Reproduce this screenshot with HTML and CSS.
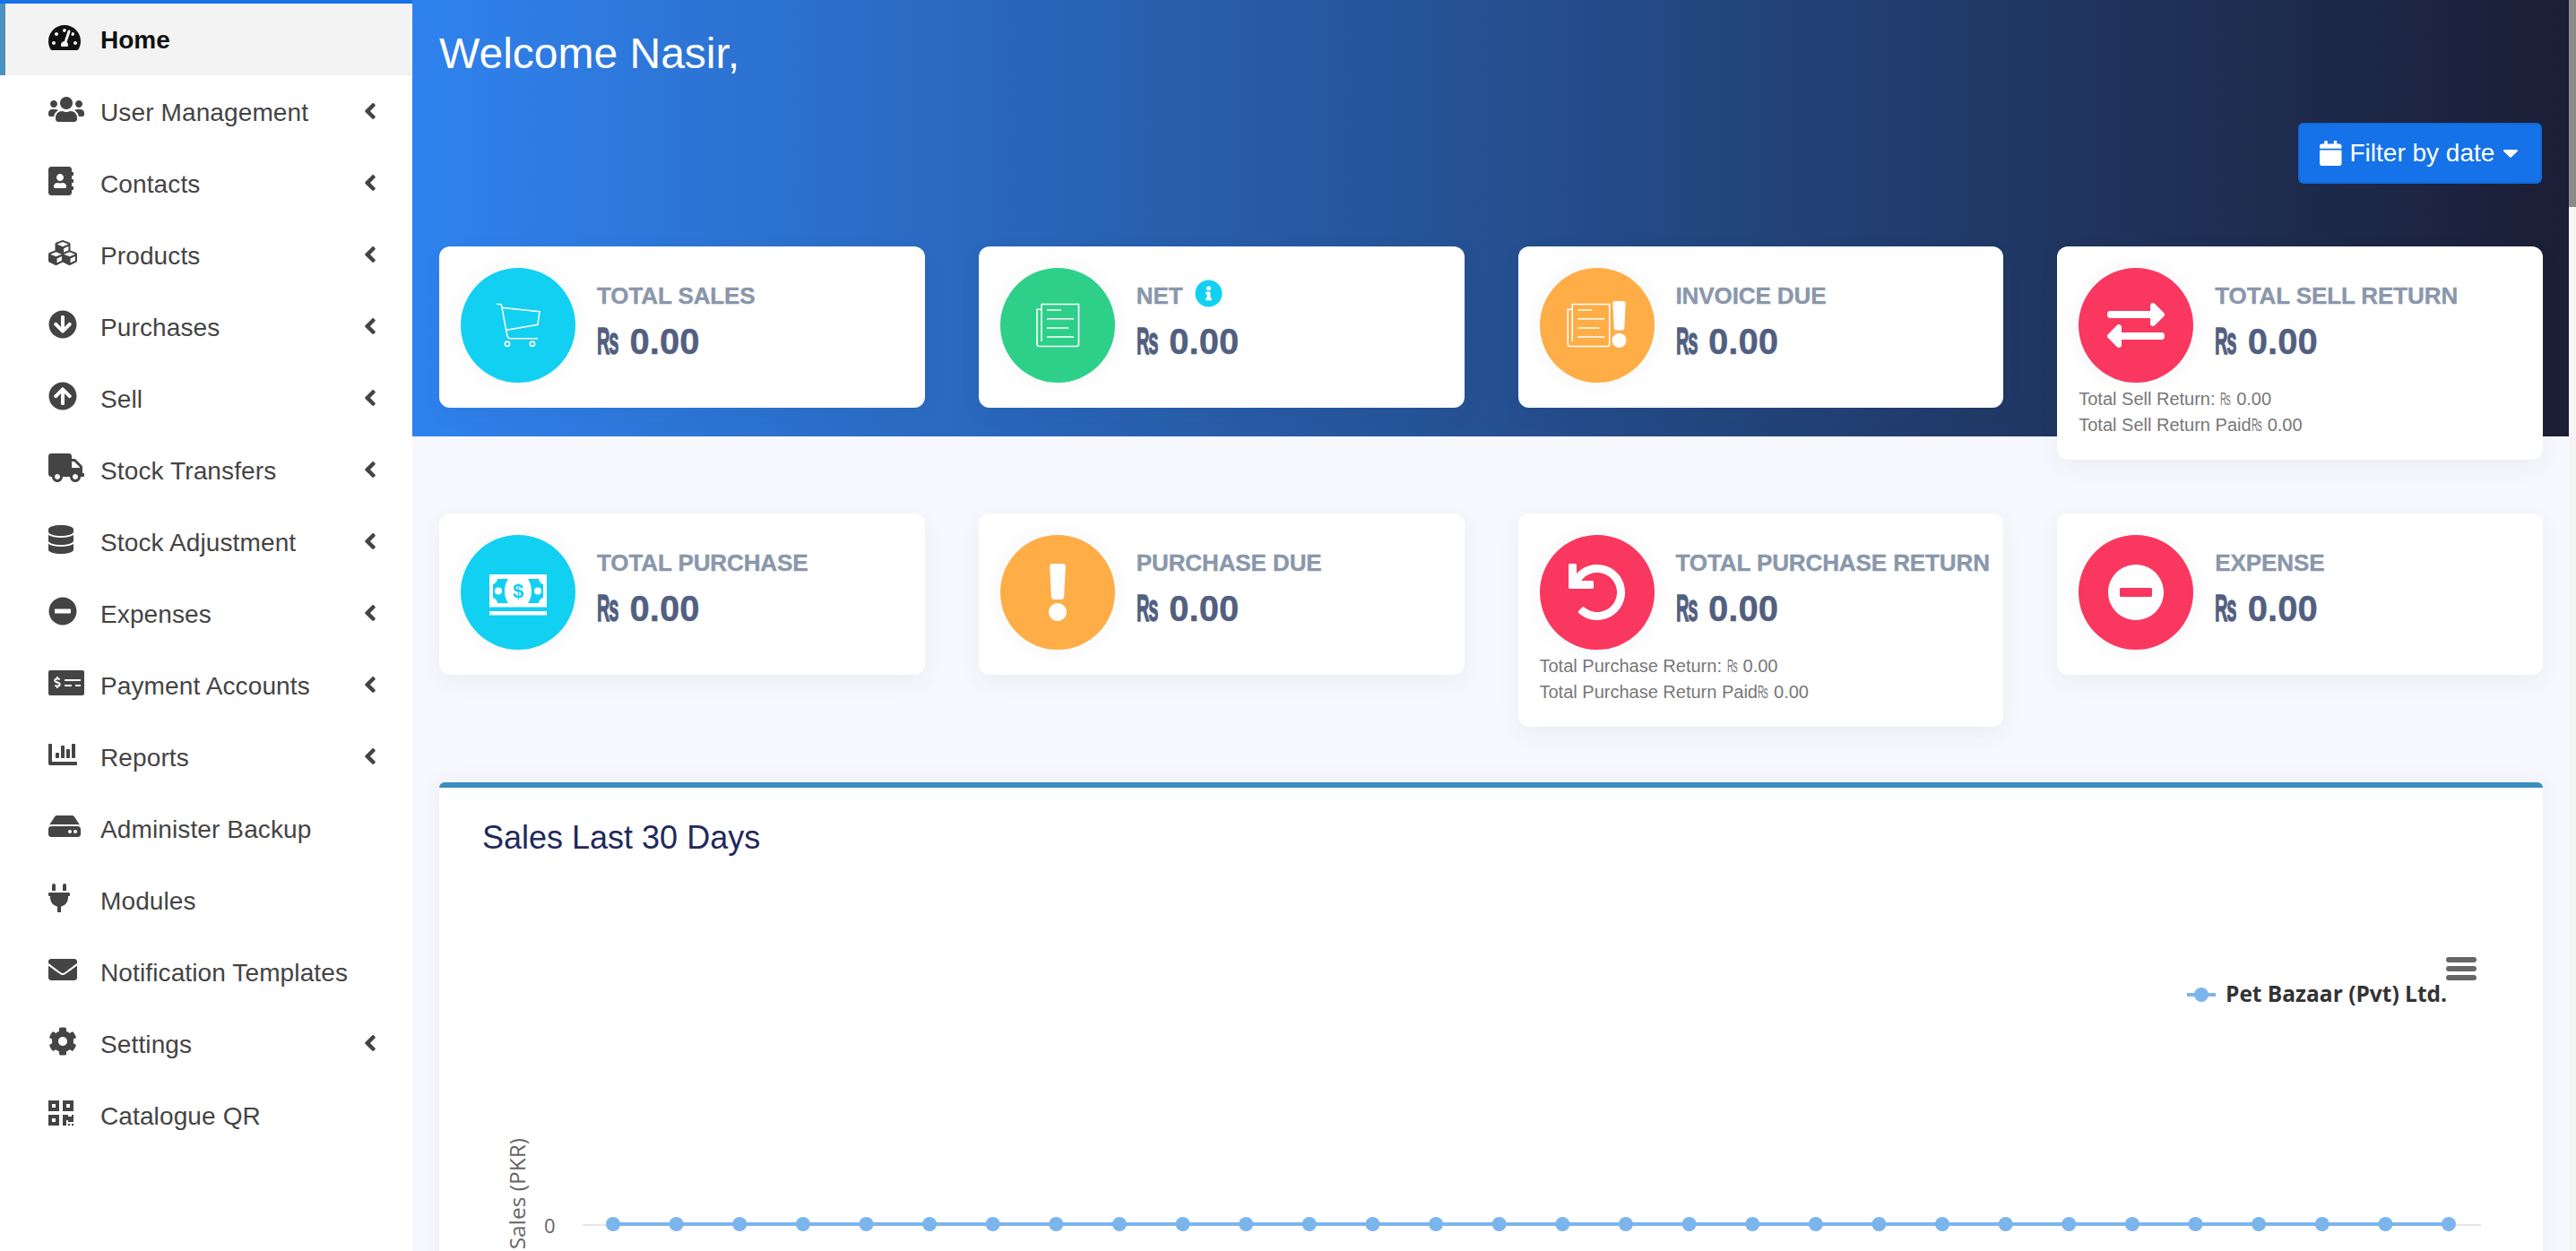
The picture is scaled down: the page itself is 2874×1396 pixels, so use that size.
FILE: index.html
```html
<!DOCTYPE html>
<html lang="en">
<head>
<meta charset="utf-8">
<title>Home</title>
<link rel="stylesheet" href="styles.css">
</head>
<body>
<svg class="defs" aria-hidden="true">
  <symbol id="chev" viewBox="24 96 208 320"><path d="M31.7 239l136-136c9.4-9.4 24.6-9.4 33.9 0l22.6 22.6c9.4 9.4 9.4 24.6 0 33.9L127.9 256l96.4 96.4c9.4 9.4 9.4 24.6 0 33.9L201.7 409c-9.4 9.4-24.6 9.4-33.9 0l-136-136c-9.5-9.4-9.5-24.6-.1-34z"/></symbol>
</svg>
<div class="app">
  <aside class="sidebar">
    <ul class="menu">
      <li class="item active"><svg class="ico" viewBox="0 0 576 512"><path d="M288 32C128.94 32 0 160.94 0 320c0 52.8 14.25 102.26 39.06 144.8 5.61 9.62 16.3 15.2 27.44 15.2h443c11.14 0 21.83-5.58 27.44-15.2C561.75 422.26 576 372.8 576 320c0-159.06-128.94-288-288-288zm0 64c14.71 0 26.58 10.13 30.32 23.65-1.11 2.26-2.64 4.23-3.45 6.67l-9.22 27.67c-5.13 3.49-10.97 6.01-17.64 6.01-17.67 0-32-14.33-32-32S270.33 96 288 96zM96 384c-17.67 0-32-14.33-32-32s14.33-32 32-32 32 14.33 32 32-14.33 32-32 32zm48-160c-17.67 0-32-14.33-32-32s14.33-32 32-32 32 14.33 32 32-14.33 32-32 32zm246.77-72.41l-61.33 184C343.13 347.33 352 364.54 352 384c0 11.72-3.38 22.55-8.88 32H232.88c-5.5-9.45-8.88-20.28-8.88-32 0-33.94 26.5-61.43 59.9-63.59l61.34-184.01c4.17-12.56 17.73-19.45 30.36-15.17 12.57 4.19 19.35 17.79 15.17 30.36zm14.66 57.2l15.52-46.55c3.47-1.29 7.13-2.23 11.05-2.23 17.67 0 32 14.33 32 32s-14.33 32-32 32c-11.38-.01-20.89-6.28-26.57-15.22zM480 384c-17.67 0-32-14.33-32-32s14.33-32 32-32 32 14.33 32 32-14.33 32-32 32z"/></svg><span class="label">Home</span></li>
      <li class="item"><svg class="ico" viewBox="0 0 640 512"><path d="M96 224c35.3 0 64-28.7 64-64s-28.7-64-64-64-64 28.7-64 64 28.7 64 64 64zm448 0c35.3 0 64-28.7 64-64s-28.7-64-64-64-64 28.7-64 64 28.7 64 64 64zm32 32h-64c-17.6 0-33.5 7.1-45.1 18.6 40.3 22.1 68.9 62 75.1 109.4h66c17.7 0 32-14.3 32-32v-32c0-35.3-28.7-64-64-64zm-256 0c61.9 0 112-50.1 112-112S381.9 32 320 32 208 82.1 208 144s50.1 112 112 112zm76.8 32h-8.3c-20.8 10-43.9 16-68.5 16s-47.6-6-68.5-16h-8.3C179.6 288 128 339.6 128 403.2V432c0 26.5 21.5 48 48 48h288c26.5 0 48-21.5 48-48v-28.8c0-63.6-51.6-115.2-115.2-115.2zm-223.7-13.4C161.5 263.1 145.6 256 128 256H64c-35.3 0-64 28.7-64 64v32c0 17.7 14.3 32 32 32h65.9c6.3-47.4 34.9-87.3 75.2-109.4z"/></svg><span class="label">User Management</span><svg class="chev"><use href="#chev"/></svg></li>
      <li class="item"><svg class="ico" viewBox="0 0 448 512"><path d="M436 160c6.6 0 12-5.4 12-12v-40c0-6.6-5.4-12-12-12h-20V48c0-26.5-21.5-48-48-48H48C21.5 0 0 21.5 0 48v416c0 26.5 21.5 48 48 48h320c26.5 0 48-21.5 48-48v-48h20c6.6 0 12-5.4 12-12v-40c0-6.6-5.4-12-12-12h-20v-64h20c6.6 0 12-5.4 12-12v-40c0-6.6-5.4-12-12-12h-20v-64h20zm-228-32c35.3 0 64 28.7 64 64s-28.7 64-64 64-64-28.7-64-64 28.7-64 64-64zm112 236.8c0 10.6-10 19.2-22.4 19.2H118.4C106 384 96 375.4 96 364.8v-19.2c0-31.8 30.1-57.6 67.2-57.6h5c12.3 5.1 25.7 8 39.8 8s27.6-2.9 39.8-8h5c37.1 0 67.2 25.8 67.2 57.6v19.2z"/></svg><span class="label">Contacts</span><svg class="chev"><use href="#chev"/></svg></li>
      <li class="item"><svg class="ico" viewBox="0 0 512 512"><path d="M488.6 250.2L392 214V105.5c0-15-9.3-28.4-23.4-33.7l-100-37.5c-8.1-3.1-17.1-3.1-25.3 0l-100 37.5c-14.1 5.3-23.4 18.7-23.4 33.7V214l-96.6 36.2C9.3 255.5 0 268.9 0 283.9V394c0 13.6 7.7 26.1 19.9 32.2l100 50c10.1 5.1 22.1 5.1 32.2 0l103.9-52 103.9 52c10.1 5.1 22.1 5.1 32.2 0l100-50c12.2-6.1 19.9-18.6 19.9-32.2V283.9c0-15-9.3-28.4-23.4-33.7zM358 214.8l-85 31.9v-68.2l85-37v73.3zM154 104.1l102-38.2 102 38.2v.6l-102 41.4-102-41.4v-.6zm84 291.1l-85 42.5v-79.1l85-38.8v75.4zm0-112l-102 41.4-102-41.4v-.6l102-38.2 102 38.2v.6zm240 112l-85 42.5v-79.1l85-38.8v75.4zm0-112l-102 41.4-102-41.4v-.6l102-38.2 102 38.2v.6z"/></svg><span class="label">Products</span><svg class="chev"><use href="#chev"/></svg></li>
      <li class="item"><svg class="ico" viewBox="0 0 512 512"><path d="M504 256c0 137-111 248-248 248S8 393 8 256 119 8 256 8s248 111 248 248zm-143.6-28.9L288 302.6V120c0-13.3-10.7-24-24-24h-16c-13.3 0-24 10.7-24 24v182.6l-72.4-75.5c-9.3-9.7-24.8-9.9-34.3-.4l-10.9 11c-9.4 9.4-9.4 24.6 0 33.9L239 404.3c9.4 9.4 24.6 9.4 33.9 0l132.7-132.7c9.4-9.4 9.4-24.6 0-33.9l-10.9-11c-9.5-9.5-25-9.3-34.3.4z"/></svg><span class="label">Purchases</span><svg class="chev"><use href="#chev"/></svg></li>
      <li class="item"><svg class="ico" viewBox="0 0 512 512"><path d="M8 256C8 119 119 8 256 8s248 111 248 248-111 248-248 248S8 393 8 256zm143.6 28.9l72.4-75.5V392c0 13.3 10.7 24 24 24h16c13.3 0 24-10.7 24-24V209.4l72.4 75.5c9.3 9.7 24.8 9.9 34.3.4l10.9-11c9.4-9.4 9.4-24.6 0-33.9L273 107.7c-9.4-9.4-24.6-9.4-33.9 0L106.3 240.4c-9.4 9.4-9.4 24.6 0 33.9l10.9 11c9.6 9.5 25.1 9.3 34.4-.4z"/></svg><span class="label">Sell</span><svg class="chev"><use href="#chev"/></svg></li>
      <li class="item"><svg class="ico" viewBox="0 0 640 512"><path d="M624 352h-16V243.9c0-12.7-5.1-24.9-14.1-33.9L494 110.1c-9-9-21.2-14.1-33.9-14.1H416V48c0-26.5-21.5-48-48-48H48C21.5 0 0 21.5 0 48v320c0 26.5 21.5 48 48 48h16c0 53 43 96 96 96s96-43 96-96h128c0 53 43 96 96 96s96-43 96-96h48c8.8 0 16-7.2 16-16v-32c0-8.8-7.2-16-16-16zM160 464c-26.5 0-48-21.5-48-48s21.5-48 48-48 48 21.5 48 48-21.5 48-48 48zm320 0c-26.5 0-48-21.5-48-48s21.5-48 48-48 48 21.5 48 48-21.5 48-48 48zm80-208H416V144h44.1l99.9 99.9V256z"/></svg><span class="label">Stock Transfers</span><svg class="chev"><use href="#chev"/></svg></li>
      <li class="item"><svg class="ico" viewBox="0 0 448 512"><path d="M448 73.143v45.714C448 159.143 347.667 192 224 192S0 159.143 0 118.857V73.143C0 32.857 100.333 0 224 0s224 32.857 224 73.143zM448 176v102.857C448 319.143 347.667 352 224 352S0 319.143 0 278.857V176c48.125 33.143 136.208 48.572 224 48.572S399.874 209.143 448 176zm0 160v102.857C448 479.143 347.667 512 224 512S0 479.143 0 438.857V336c48.125 33.143 136.208 48.572 224 48.572S399.874 369.143 448 336z"/></svg><span class="label">Stock Adjustment</span><svg class="chev"><use href="#chev"/></svg></li>
      <li class="item"><svg class="ico" viewBox="0 0 512 512"><path d="M256 8C119 8 8 119 8 256s111 248 248 248 248-111 248-248S393 8 256 8zM124 296c-6.6 0-12-5.4-12-12v-56c0-6.6 5.4-12 12-12h264c6.6 0 12 5.4 12 12v56c0 6.6-5.4 12-12 12H124z"/></svg><span class="label">Expenses</span><svg class="chev"><use href="#chev"/></svg></li>
      <li class="item"><svg class="ico" viewBox="0 0 640 512"><path d="M608 32H32C14.33 32 0 46.33 0 64v384c0 17.67 14.33 32 32 32h576c17.67 0 32-14.33 32-32V64c0-17.67-14.33-32-32-32zM176 327.88V344c0 4.42-3.58 8-8 8h-16c-4.42 0-8-3.58-8-8v-16.29c-11.29-.58-22.27-4.52-31.37-11.35-3.9-2.93-4.1-8.77-.57-12.14l11.75-11.21c2.77-2.64 6.89-2.76 10.13-.73 3.87 2.42 8.26 3.72 12.82 3.72h28.11c6.5 0 11.8-5.92 11.8-13.19 0-5.95-3.61-11.19-8.77-12.73l-45-13.5c-18.59-5.58-31.58-23.42-31.58-43.39 0-24.52 19.05-44.44 42.67-45.07V152c0-4.42 3.58-8 8-8h16c4.42 0 8 3.58 8 8v16.29c11.29.58 22.27 4.51 31.37 11.35 3.9 2.93 4.1 8.77.57 12.14l-11.75 11.21c-2.77 2.64-6.89 2.76-10.13.73-3.87-2.43-8.26-3.72-12.82-3.72h-28.11c-6.5 0-11.8 5.92-11.8 13.19 0 5.95 3.61 11.19 8.77 12.73l45 13.5c18.59 5.58 31.58 23.42 31.58 43.39 0 24.53-19.05 44.44-42.67 45.07zM416 312c0 4.42-3.58 8-8 8H296c-4.42 0-8-3.58-8-8v-16c0-4.42 3.58-8 8-8h112c4.42 0 8 3.58 8 8v16zm160 0c0 4.42-3.58 8-8 8h-80c-4.42 0-8-3.58-8-8v-16c0-4.42 3.58-8 8-8h80c4.42 0 8 3.58 8 8v16zm0-96c0 4.42-3.58 8-8 8H296c-4.42 0-8-3.58-8-8v-16c0-4.42 3.58-8 8-8h272c4.42 0 8 3.58 8 8v16z"/></svg><span class="label">Payment Accounts</span><svg class="chev"><use href="#chev"/></svg></li>
      <li class="item"><svg class="ico" viewBox="0 0 512 512"><path d="M332.8 320h38.4c6.4 0 12.8-6.4 12.8-12.8V172.8c0-6.4-6.4-12.8-12.8-12.8h-38.4c-6.4 0-12.8 6.4-12.8 12.8v134.4c0 6.4 6.4 12.8 12.8 12.8zm96 0h38.4c6.4 0 12.8-6.4 12.8-12.8V76.8c0-6.4-6.4-12.8-12.8-12.8h-38.4c-6.4 0-12.8 6.4-12.8 12.8v230.4c0 6.4 6.4 12.8 12.8 12.8zm-288 0h38.4c6.4 0 12.8-6.4 12.8-12.8v-70.4c0-6.4-6.4-12.8-12.8-12.8h-38.4c-6.4 0-12.8 6.4-12.8 12.8v70.4c0 6.4 6.4 12.8 12.8 12.8zm96 0h38.4c6.4 0 12.8-6.4 12.8-12.8V108.8c0-6.4-6.4-12.8-12.8-12.8h-38.4c-6.4 0-12.8 6.4-12.8 12.8v198.4c0 6.4 6.4 12.8 12.8 12.8zM496 384H64V80c0-8.84-7.16-16-16-16H16C7.16 64 0 71.16 0 80v336c0 17.67 14.33 32 32 32h464c8.84 0 16-7.16 16-16v-32c0-8.84-7.16-16-16-16z"/></svg><span class="label">Reports</span><svg class="chev"><use href="#chev"/></svg></li>
      <li class="item"><svg class="ico" viewBox="0 0 576 512"><path d="M576 304v96c0 26.51-21.49 48-48 48H48c-26.51 0-48-21.49-48-48v-96c0-26.51 21.49-48 48-48h480c26.51 0 48 21.49 48 48zm-48-80a79.557 79.557 0 0 1 30.777 6.165L462.25 85.374A48.003 48.003 0 0 0 422.311 64H153.689a48 48 0 0 0-39.938 21.374L17.223 230.165A79.557 79.557 0 0 1 48 224h480zm-48 96c-17.673 0-32 14.327-32 32s14.327 32 32 32 32-14.327 32-32-14.327-32-32-32zm-96 0c-17.673 0-32 14.327-32 32s14.327 32 32 32 32-14.327 32-32-14.327-32-32-32z"/></svg><span class="label">Administer Backup</span></li>
      <li class="item"><svg class="ico" viewBox="0 0 384 512"><path d="M320,32a32,32,0,0,0-64,0v96h64Zm48,128H16A16,16,0,0,0,0,176v32a16,16,0,0,0,16,16H32v32A160.07,160.07,0,0,0,160,412.8V512h64V412.8A160.07,160.07,0,0,0,352,256V224h16a16,16,0,0,0,16-16V176A16,16,0,0,0,368,160ZM128,32a32,32,0,0,0-64,0v96h64Z"/></svg><span class="label">Modules</span></li>
      <li class="item"><svg class="ico" viewBox="0 0 512 512"><path d="M502.3 190.8c3.9-3.1 9.7-.2 9.7 4.7V400c0 26.5-21.5 48-48 48H48c-26.5 0-48-21.5-48-48V195.6c0-5 5.7-7.8 9.7-4.7 22.4 17.4 52.1 39.5 154.1 113.6 21.1 15.4 56.7 47.8 92.2 47.6 35.7.3 72-32.8 92.3-47.6 102-74.1 131.6-96.3 154-113.7zM256 320c23.2.4 56.6-29.2 73.4-41.4 132.7-96.3 142.8-104.7 173.4-128.7 5.8-4.5 9.2-11.5 9.2-18.9v-19c0-26.5-21.5-48-48-48H48C21.5 64 0 85.5 0 112v19c0 7.4 3.4 14.3 9.2 18.9 30.6 23.9 40.7 32.4 173.4 128.7 16.8 12.2 50.2 41.8 73.4 41.4z"/></svg><span class="label">Notification Templates</span></li>
      <li class="item"><svg class="ico" viewBox="0 0 512 512"><path d="M487.4 315.7l-42.6-24.6c4.3-23.2 4.3-47 0-70.2l42.6-24.6c4.9-2.8 7.1-8.6 5.5-14-11.1-35.6-30-67.8-54.7-94.6-3.8-4.1-10-5.1-14.8-2.3L380.8 110c-17.9-15.4-38.5-27.3-60.8-35.1V25.8c0-5.6-3.9-10.5-9.4-11.7-36.7-8.2-74.3-7.8-109.2 0-5.5 1.2-9.4 6.1-9.4 11.7V75c-22.2 7.9-42.8 19.8-60.8 35.1L88.7 85.5c-4.9-2.8-11-1.9-14.8 2.3-24.7 26.7-43.6 58.9-54.7 94.6-1.7 5.4.6 11.2 5.5 14L67.3 221c-4.3 23.2-4.3 47 0 70.2l-42.6 24.6c-4.9 2.8-7.1 8.6-5.5 14 11.1 35.6 30 67.8 54.7 94.6 3.8 4.1 10 5.1 14.8 2.3l42.6-24.6c17.9 15.4 38.5 27.3 60.8 35.1v49.2c0 5.6 3.9 10.5 9.4 11.7 36.7 8.2 74.3 7.8 109.2 0 5.5-1.2 9.4-6.1 9.4-11.7v-49.2c22.2-7.9 42.8-19.8 60.8-35.1l42.6 24.6c4.9 2.8 11 1.9 14.8-2.3 24.7-26.7 43.6-58.9 54.7-94.6 1.5-5.5-.7-11.3-5.6-14.1zM256 336c-44.1 0-80-35.9-80-80s35.9-80 80-80 80 35.9 80 80-35.9 80-80 80z"/></svg><span class="label">Settings</span><svg class="chev"><use href="#chev"/></svg></li>
      <li class="item"><svg class="ico" viewBox="0 0 448 512"><path d="M0 224h192V32H0v192zM64 96h64v64H64V96zm192-64v192h192V32H256zm128 128h-64V96h64v64zM0 480h192V288H0v192zm64-128h64v64H64v-64zm352-64h32v128h-96v-32h-32v96h-64V288h96v32h64v-32zm0 160h32v32h-32v-32zm-64 0h32v32h-32v-32z"/></svg><span class="label">Catalogue QR</span></li>
    </ul>
  </aside>

  <main class="main">
    <h1 class="welcome">Welcome Nasir,</h1>
    <div class="filter-row">
      <button class="filter-btn" type="button">
        <svg class="btn-ico" viewBox="0 0 448 512"><path d="M12 192h424c6.6 0 12 5.4 12 12v260c0 26.5-21.5 48-48 48H48c-26.5 0-48-21.5-48-48V204c0-6.6 5.4-12 12-12zm436-44v-36c0-26.5-21.5-48-48-48h-48V12c0-6.6-5.4-12-12-12h-40c-6.6 0-12 5.4-12 12v52H160V12c0-6.6-5.4-12-12-12h-40c-6.6 0-12 5.4-12 12v52H48C21.5 64 0 85.5 0 112v36c0 6.6 5.4 12 12 12h424c6.6 0 12-5.4 12-12z"/></svg>
        <span>Filter by date</span>
        <svg class="caret" viewBox="0 0 16 9"><path d="M1.2 0h13.6c1 0 1.5 1.2.8 1.9L8.8 8.6c-.4.5-1.2.5-1.6 0L.4 1.9C-.3 1.2.2 0 1.2 0z"/></svg>
      </button>
    </div>

    <section class="stats">
      <article class="card">
        <div class="card-top">
          <div class="badge cyan">
            <svg class="badge-art" viewBox="0 0 128 128" fill="none" stroke="#fff" stroke-width="1.6"><path d="M40 40.3c3 0 5.2.2 5.6 1.8l6 32c.4 3 1.4 4.6 4 4.6H86"/><path d="M45.5 44.3L88 48.7l-2 14.6-35 6"/><circle cx="52" cy="84.7" r="2.6"/><circle cx="80" cy="84.7" r="2.6"/></svg>
          </div>
          <div class="info"><h3 class="title">TOTAL SALES</h3><p class="value"><span>₨</span> 0.00</p></div>
        </div>
      </article>
      <article class="card">
        <div class="card-top">
          <div class="badge green">
            <svg class="badge-art" viewBox="0 0 128 128" fill="none" stroke="#fff" stroke-width="1.6"><path d="M46 82V40.5h41.5V85a2.5 2.5 0 0 1-2.5 2.5H43.5A2.5 2.5 0 0 1 41 85V46.3h5"/><path d="M52 47h16M52 56.7h30M52 67h24M52 77h30"/></svg>
          </div>
          <div class="info"><h3 class="title">NET<svg class="tip" viewBox="0 0 512 512"><path d="M256 8C119.043 8 8 119.083 8 256c0 136.997 111.043 248 248 248s248-111.003 248-248C504 119.083 392.957 8 256 8zm0 110c23.196 0 42 18.804 42 42s-18.804 42-42 42-42-18.804-42-42 18.804-42 42-42zm56 254c0 6.627-5.373 12-12 12h-88c-6.627 0-12-5.373-12-12v-24c0-6.627 5.373-12 12-12h12v-64h-12c-6.627 0-12-5.373-12-12v-24c0-6.627 5.373-12 12-12h64c6.627 0 12 5.373 12 12v100h12c6.627 0 12 5.373 12 12v24z"/></svg></h3><p class="value"><span>₨</span> 0.00</p></div>
        </div>
      </article>
      <article class="card">
        <div class="card-top">
          <div class="badge orange">
            <svg class="badge-art" viewBox="0 0 128 128" fill="none" stroke="#fff" stroke-width="1.6"><path d="M36.2 82V40.5h41.5V85a2.5 2.5 0 0 1-2.5 2.5H33.7a2.5 2.5 0 0 1-2.5-2.5V46.3h5"/><path d="M42.2 47h16M42.2 56.7h30M42.2 67h24M42.2 77h30"/><svg x="80.4" y="37" width="16.2" height="52" viewBox="16 0 160 512"><path fill="#fff" stroke="none" d="M176 432c0 44.112-35.888 80-80 80s-80-35.888-80-80 35.888-80 80-80 80 35.888 80 80zM25.26 25.199l13.6 272C39.499 309.972 50.041 320 62.83 320h66.34c12.789 0 23.331-10.028 23.97-22.801l13.6-272C167.425 11.49 156.496 0 142.77 0H49.23C35.504 0 24.575 11.49 25.26 25.199z"/></svg></svg>
          </div>
          <div class="info"><h3 class="title">INVOICE DUE</h3><p class="value"><span>₨</span> 0.00</p></div>
        </div>
      </article>
      <article class="card">
        <div class="card-top">
          <div class="badge red">
            <svg class="fa-64" viewBox="0 0 512 512"><path d="M0 168v-16c0-13.255 10.745-24 24-24h360V80c0-21.367 25.899-32.042 40.971-16.971l80 80c9.372 9.373 9.372 24.569 0 33.941l-80 80C409.956 271.982 384 261.456 384 240v-48H24c-13.255 0-24-10.745-24-24zm488 152H128v-48c0-21.314-25.862-32.08-40.971-16.971l-80 80c-9.372 9.373-9.372 24.569 0 33.941l80 80C102.057 463.997 128 453.437 128 432v-48h360c13.255 0 24-10.745 24-24v-16c0-13.255-10.745-24-24-24z"/></svg>
          </div>
          <div class="info"><h3 class="title">TOTAL SELL RETURN</h3><p class="value"><span>₨</span> 0.00</p></div>
        </div>
        <p class="sub">Total Sell Return: <span>₨</span> 0.00</p>
        <p class="sub">Total Sell Return Paid<span>₨</span> 0.00</p>
      </article>

      <article class="card">
        <div class="card-top">
          <div class="badge cyan">
            <svg class="badge-art" viewBox="0 0 128 128">
              <rect x="32" y="44" width="64" height="36.500" fill="#fff"/>
              <rect x="32" y="85" width="64" height="4.500" fill="#fff"/>
              <path fill="#12d0f2" d="M41 49h12c-3 5-4 9-4 13.500s1 9 4 13.500H41c-.5-3-2.500-5.500-5-6V55c2.500-.5 4.500-3 5-6zm46 0H75c3 5 4 9 4 13.500s-1 9-4 13.500h12c.5-3 2.500-5.500 5-6V55c-2.500-.5-4.500-3-5-6z"/>
              <circle cx="42" cy="62.500" r="4" fill="#fff"/><circle cx="86" cy="62.500" r="4" fill="#fff"/>
              <text class="dollar" x="64" y="70">$</text>
            </svg>
          </div>
          <div class="info"><h3 class="title">TOTAL PURCHASE</h3><p class="value"><span>₨</span> 0.00</p></div>
        </div>
      </article>
      <article class="card">
        <div class="card-top">
          <div class="badge orange">
            <svg class="fa-excl" viewBox="16 0 160 512"><path d="M176 432c0 44.112-35.888 80-80 80s-80-35.888-80-80 35.888-80 80-80 80 35.888 80 80zM25.26 25.199l13.6 272C39.499 309.972 50.041 320 62.83 320h66.34c12.789 0 23.331-10.028 23.97-22.801l13.6-272C167.425 11.49 156.496 0 142.77 0H49.23C35.504 0 24.575 11.49 25.26 25.199z"/></svg>
          </div>
          <div class="info"><h3 class="title">PURCHASE DUE</h3><p class="value"><span>₨</span> 0.00</p></div>
        </div>
      </article>
      <article class="card">
        <div class="card-top">
          <div class="badge red">
            <svg class="fa-64" viewBox="0 0 512 512"><path d="M212.333 224.333H12c-6.627 0-12-5.373-12-12V12C0 5.373 5.373 0 12 0h48c6.627 0 12 5.373 12 12v78.112C117.773 39.279 184.26 7.47 258.175 8.007c136.906.994 246.448 111.623 246.157 248.532C504.041 393.258 393.12 504 256.333 504c-64.089 0-122.496-24.313-166.51-64.215-5.099-4.622-5.334-12.554-.467-17.42l33.967-33.967c4.474-4.474 11.662-4.717 16.401-.525C170.76 415.336 211.58 432 256.333 432c97.268 0 176-78.716 176-176 0-97.267-78.716-176-176-176-58.496 0-110.28 28.476-142.274 72.333h98.274c6.627 0 12 5.373 12 12v48c0 6.627-5.373 12-12 12z"/></svg>
          </div>
          <div class="info"><h3 class="title">TOTAL PURCHASE RETURN</h3><p class="value"><span>₨</span> 0.00</p></div>
        </div>
        <p class="sub">Total Purchase Return: <span>₨</span> 0.00</p>
        <p class="sub">Total Purchase Return Paid<span>₨</span> 0.00</p>
      </article>
      <article class="card">
        <div class="card-top">
          <div class="badge red">
            <svg class="fa-64" viewBox="0 0 512 512"><path d="M256 8C119 8 8 119 8 256s111 248 248 248 248-111 248-248S393 8 256 8zM124 296c-6.6 0-12-5.4-12-12v-56c0-6.6 5.4-12 12-12h264c6.6 0 12 5.4 12 12v56c0 6.6-5.4 12-12 12H124z"/></svg>
          </div>
          <div class="info"><h3 class="title">EXPENSE</h3><p class="value"><span>₨</span> 0.00</p></div>
        </div>
      </article>
    </section>

    <section class="chart-box">
      <h2 class="chart-title">Sales Last 30 Days</h2>
      <svg class="chart" viewBox="490 957 2347 480" width="2347" height="480">
        <rect x="2729" y="1066" width="34" height="6" rx="3" class="burger"/>
        <rect x="2729" y="1076" width="34" height="6" rx="3" class="burger"/>
        <rect x="2729" y="1086" width="34" height="6" rx="3" class="burger"/>
        <line x1="2440" y1="1108" x2="2472" y2="1108" class="series"/>
        <circle cx="2456" cy="1108" r="8" class="dot"/>
        <text x="2483" y="1116" class="legend">Pet Bazaar (Pvt) Ltd.</text>
        <text transform="translate(586 1268) rotate(-90)" class="axis-title">Sales (PKR)</text>
        <text x="607" y="1374" class="tick">0</text>
        <line x1="650" y1="1365" x2="2768" y2="1365" class="grid"/>
        <line x1="684" y1="1364" x2="2732" y2="1364" class="series"/>
        <circle cx="684" cy="1364" r="8" class="dot"/><circle cx="754.6" cy="1364" r="8" class="dot"/><circle cx="825.2" cy="1364" r="8" class="dot"/><circle cx="895.9" cy="1364" r="8" class="dot"/><circle cx="966.5" cy="1364" r="8" class="dot"/><circle cx="1037.1" cy="1364" r="8" class="dot"/><circle cx="1107.7" cy="1364" r="8" class="dot"/><circle cx="1178.3" cy="1364" r="8" class="dot"/><circle cx="1249" cy="1364" r="8" class="dot"/><circle cx="1319.6" cy="1364" r="8" class="dot"/><circle cx="1390.2" cy="1364" r="8" class="dot"/><circle cx="1460.8" cy="1364" r="8" class="dot"/><circle cx="1531.4" cy="1364" r="8" class="dot"/><circle cx="1602.1" cy="1364" r="8" class="dot"/><circle cx="1672.7" cy="1364" r="8" class="dot"/><circle cx="1743.3" cy="1364" r="8" class="dot"/><circle cx="1813.9" cy="1364" r="8" class="dot"/><circle cx="1884.6" cy="1364" r="8" class="dot"/><circle cx="1955.2" cy="1364" r="8" class="dot"/><circle cx="2025.8" cy="1364" r="8" class="dot"/><circle cx="2096.4" cy="1364" r="8" class="dot"/><circle cx="2167" cy="1364" r="8" class="dot"/><circle cx="2237.7" cy="1364" r="8" class="dot"/><circle cx="2308.3" cy="1364" r="8" class="dot"/><circle cx="2378.9" cy="1364" r="8" class="dot"/><circle cx="2449.5" cy="1364" r="8" class="dot"/><circle cx="2520.1" cy="1364" r="8" class="dot"/><circle cx="2590.8" cy="1364" r="8" class="dot"/><circle cx="2661.4" cy="1364" r="8" class="dot"/><circle cx="2732" cy="1364" r="8" class="dot"/>
      </svg>
    </section>
  </main>

  <div class="scrollbar"><div class="thumb"></div></div>
</div>
</body>
</html>
```

FILE: styles.css
```css
* { box-sizing: border-box; }
html, body { margin: 0; padding: 0; height: 1396px; overflow: hidden; }
body { font-family: "Liberation Sans", Arial, sans-serif; background: #f7f8fd; color: #444; }
.defs { display: none; }
.app { display: flex; height: 1396px; overflow: hidden; }

.sidebar { flex: 0 0 460px; background: #fff; border-top: 4px solid #1572e8; }
.menu { list-style: none; margin: 0; padding: 0; }
.item { display: grid; grid-template-columns: 58px 1fr auto; align-items: center; height: 80px; padding: 0 41px 0 54px; font-size: 28px; color: #444; fill: #444; }
.item.active { background: #f3f3f3; color: #111; fill: #111; font-weight: 700; border-left: 6px solid #4b92c1; padding-left: 48px; }
.ico { justify-self: start; width: auto; height: 32px; margin-top: -4px; }
.label { padding-top: 4px; white-space: nowrap; letter-spacing: .12px; }
.active .label { padding-top: 2px; letter-spacing: 0; }
.chev { width: 12px; height: 18px; margin-top: 0; }

.main { flex: 1 1 auto; min-width: 0; padding: 0 29px 0 30px; background: linear-gradient(to right, #2f82ee, #1b1e35) top left / 100% 487px no-repeat, #f7f8fd; }
.welcome { margin: 0; font-size: 48px; font-weight: 400; line-height: 120px; color: #fff; }
.filter-row { display: flex; justify-content: flex-end; margin-top: 17px; }
.filter-btn { display: flex; align-items: center; height: 68px; width: 272px; padding: 0 0 0 22px; margin-right: 1px; font: 28px "Liberation Sans", Arial, sans-serif; color: #fff; background: #1572e8; border: 2px solid #1269d8; border-radius: 6px; }
.btn-ico { width: 24.500px; height: 28px; fill: #fff; margin-right: 9px; }
.caret { width: 16px; height: 9px; fill: #fff; margin-left: 10px; }

.stats { display: grid; grid-template-columns: repeat(4, minmax(0, 1fr)); gap: 60px; align-items: start; margin-top: 70px; }
.card { min-height: 180px; padding: 24px; background: #fff; border-radius: 12px; box-shadow: 0 8px 24px rgba(50, 60, 110, .06); }
.card-top { display: flex; gap: 24px; }
.badge { flex: 0 0 128px; height: 128px; display: flex; align-items: center; justify-content: center; border-radius: 50%; box-shadow: 0 0 24px rgba(40, 60, 60, .05); fill: #fff; }
.cyan { background: #12d0f2; }
.green { background: #2ed089; }
.orange { background: #ffad46; }
.red { background: #fa375f; }
.badge-art { width: 128px; height: 128px; }
.fa-64 { width: 64px; height: 64px; }
.fa-excl { width: 20px; height: 64px; }
.dollar { font: 700 22px "Liberation Sans", Arial, sans-serif; fill: #12d0f2; text-anchor: middle; }
.info { min-width: 0; padding-top: 13px; }
.title { display: flex; align-items: center; margin: 0; font-size: 26px; line-height: 36px; font-weight: 700; letter-spacing: -.1px; -webkit-text-stroke: .4px #8a97ab; color: #8a97ab; white-space: nowrap; }
.tip { width: 31px; height: 31px; fill: #12d0f2; margin: -6px 0 0 14px; }
.value { margin: 5px 0 0; font-size: 40px; line-height: 56px; font-weight: 700; -webkit-text-stroke: .4px #525f80; color: #525f80; white-space: nowrap; }
.value span { display: inline-block; width: 25.5px; -webkit-text-stroke: 1.2px #525f80; transform: scale(.5, 1.06); transform-origin: 0 72%; }
.sub { margin: 0; font-size: 20px; line-height: 29px; color: #777; white-space: nowrap; }
.sub span { display: inline-block; width: 12.5px; transform: scaleX(.5); transform-origin: 0 50%; }
.card-top + .sub { margin-top: 4px; }

.chart-box { margin-top: 62px; height: 600px; background: #fff; border-top: 6px solid #3c8dbc; border-radius: 6px 6px 0 0; box-shadow: 0 0 24px rgba(50, 60, 110, .06); }
.chart-title { margin: 0; padding: 32px 0 0 48px; font-size: 36px; font-weight: 400; line-height: 48px; color: #1f2a5c; }
.chart { display: block; }
.burger { fill: #666; }
.series { stroke: #7cb5ec; stroke-width: 4; }
.dot { fill: #7cb5ec; }
.grid { stroke: #e6e6e6; stroke-width: 2; }
.legend { font: 700 24.500px "Open Sans", sans-serif; fill: #333; }
.axis-title { font: 400 24.500px "Open Sans", sans-serif; fill: #666; text-anchor: end; }
.tick { font: 400 22px "Open Sans", sans-serif; fill: #666; }

.scrollbar { flex: 0 0 8px; background: #f5f5f5; }
.thumb { height: 231px; background: #8a8a8a; }
```
